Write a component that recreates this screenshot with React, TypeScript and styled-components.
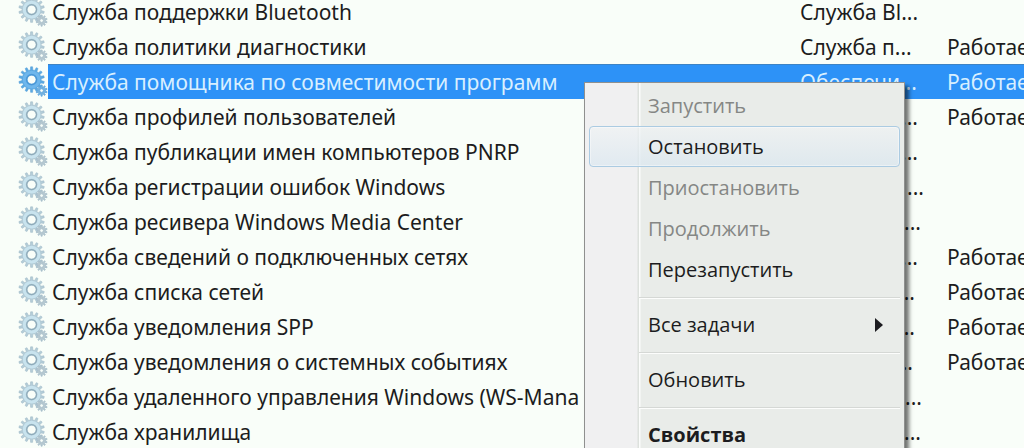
import React from "react";
import styled, { createGlobalStyle, css } from "styled-components";

const GlobalStyle = createGlobalStyle`
  *, *::before, *::after { box-sizing: border-box; }
  body {
    margin: 0;
    overflow: hidden;
    background: #f9fef9;
    color: #1c1c20;
    font-family: "Noto Sans", "Open Sans", sans-serif;
    font-size: 20px;
    line-height: 34px;
  }
`;

const Pane = styled.main`
  position: relative;
  height: 100vh;
  overflow: hidden;
`;

const ServiceTable = styled.table`
  width: 100%;
  margin-top: -6px;
  table-layout: fixed;
  border-collapse: separate;
  border-spacing: 0;
  font-size: 21px;
`;

const IconCol = styled.col`
  width: 48px;
`;

const DescriptionCol = styled.col`
  width: 147px;
`;

const StatusCol = styled.col`
  width: 81px;
`;

const Cell = styled.td`
  height: 35px;
  padding: 0 0 0 4px;
  overflow: hidden;
  white-space: nowrap;
`;

const IconCell = styled(Cell)`
  padding: 0 0 0 18px;
`;

const Row = styled.tr<{ $selected: boolean }>`
  ${(p) =>
    p.$selected &&
    css`
      color: #d8efff;
      ${Cell}:not(${IconCell}) {
        background: #2d92f7;
        border-top: 1px solid #3d83c4;
      }
    `}
`;

const Tail = styled.span<{ $width: number }>`
  display: block;
  width: ${(p) => p.$width}px;
  text-align: right;
`;

const Gears = styled.svg`
  display: block;
  width: 32px;
  height: 32px;
`;

const Menu = styled.div`
  position: absolute;
  top: 82px;
  left: 584px;
  width: 321px;
  padding: 2px 4px;
  border: 1px solid #8f908f;
  background: linear-gradient(to right, #f0f0f1 52px, #dde1dd 53px, #dde1dd 54px, #fbfcfb 54px, #fbfcfb 55px, #e9ece9 56px);
  box-shadow: 4px 4px 4px rgba(0, 0, 0, 0.55);
  font-family: "Open Sans", "Noto Sans", sans-serif;
`;

const MenuItem = styled.button<{ $active?: boolean; $strong?: boolean }>`
  display: flex;
  align-items: center;
  justify-content: space-between;
  width: 100%;
  height: 41px;
  padding: 0 16px 0 58px;
  border: 1px solid transparent;
  border-radius: 4px;
  background: none;
  color: #1c1c20;
  font: inherit;
  font-weight: ${(p) => (p.$strong ? 700 : 400)};
  text-align: left;

  &:disabled {
    color: #858785;
  }

  ${(p) =>
    p.$active &&
    css`
      border-color: #abcbe2;
      background: linear-gradient(rgba(240, 243, 244, 0.7), rgba(218, 231, 240, 0.7));
      box-shadow: inset 0 0 0 1px rgba(255, 255, 255, 0.4);
    `}
`;

const Separator = styled.hr`
  height: 2px;
  margin: 7px 0 5px 50px;
  border: 0;
  border-top: 1px solid #d5d8d5;
  border-bottom: 1px solid #fcfdfc;
`;

const Arrow = styled.svg`
  width: 8px;
  height: 14px;
  fill: #1c1c20;
`;

function gearPath(cx: number, cy: number, outer: number, inner: number, hole: number, teeth: number) {
  const step = (Math.PI * 2) / teeth;
  const at = (r: number, a: number) => `${(cx + r * Math.sin(a)).toFixed(2)} ${(cy - r * Math.cos(a)).toFixed(2)}`;
  const points: string[] = [];
  for (let i = 0; i < teeth; i++) {
    const a = i * step;
    points.push(at(inner, a - step * 0.28), at(outer, a - step * 0.17), at(outer, a + step * 0.17), at(inner, a + step * 0.28));
  }
  return `M${points.join("L")}ZM${at(hole, 0)}A${hole} ${hole} 0 1 0 ${at(hole, Math.PI)}A${hole} ${hole} 0 1 0 ${at(hole, 0)}Z`;
}

const LARGE_GEAR = gearPath(13.6, 13.6, 12.8, 9.6, 4.4, 14);
const SMALL_GEAR = gearPath(23.6, 24.6, 5.6, 3.8, 1.8, 10);

function ServiceIcon({ selected }: { selected: boolean }) {
  const large = selected ? "#5aa9e2" : "#b4cdd8";
  const edge = selected ? "#5aa2da" : "#a3bcc9";
  const ring = selected ? "#4996d6" : "#8eabba";
  const small = selected ? "#72b2e0" : "#b6c8d0";
  return (
    <Gears viewBox="0 0 32 32" aria-hidden="true">
      <path d={LARGE_GEAR} fill={large} stroke={edge} strokeWidth="0.6" fillRule="evenodd" />
      <circle cx="13.6" cy="13.6" r="7.4" fill="none" stroke={selected ? "#6fb7ec" : "#c8e3ee"} strokeWidth="3" />
      <circle cx="13.6" cy="13.6" r="5" fill="none" stroke={ring} strokeWidth="1.1" />
      <path d={SMALL_GEAR} fill={small} stroke={edge} strokeWidth="0.7" fillRule="evenodd" />
    </Gears>
  );
}

interface Service {
  name: string;
  description: string;
  tail?: number;
  running?: boolean;
  selected?: boolean;
}

const services: Service[] = [
  { name: "Служба поддержки Bluetooth", description: "Служба Bl..." },
  { name: "Служба политики диагностики", description: "Служба п...", running: true },
  { name: "Служба помощника по совместимости программ", description: "Обеспечи...", running: true, selected: true },
  { name: "Служба профилей пользователей", description: "...", tail: 118, running: true },
  { name: "Служба публикации имен компьютеров PNRP", description: "...", tail: 118 },
  { name: "Служба регистрации ошибок Windows", description: "...", tail: 124 },
  { name: "Служба ресивера Windows Media Center", description: "...", tail: 121 },
  { name: "Служба сведений о подключенных сетях", description: "...", tail: 118, running: true },
  { name: "Служба списка сетей", description: "...", tail: 115, running: true },
  { name: "Служба уведомления SPP", description: "...", tail: 115, running: true },
  { name: "Служба уведомления о системных событиях", description: "...", tail: 113, running: true },
  { name: "Служба удаленного управления Windows (WS-Mana", description: "...", tail: 122 },
  { name: "Служба хранилища", description: "...", tail: 121 },
];

export default function App() {
  return (
    <>
      <GlobalStyle />
      <Pane>
        <ServiceTable>
          <colgroup>
            <IconCol />
            <col />
            <DescriptionCol />
            <StatusCol />
          </colgroup>
          <tbody>
            {services.map((s) => (
              <Row key={s.name} $selected={!!s.selected}>
                <IconCell>
                  <ServiceIcon selected={!!s.selected} />
                </IconCell>
                <Cell>{s.name}</Cell>
                <Cell>{s.tail ? <Tail $width={s.tail}>{s.description}</Tail> : s.description}</Cell>
                <Cell>{s.running ? "Работает" : ""}</Cell>
              </Row>
            ))}
          </tbody>
        </ServiceTable>
        <Menu role="menu">
          <MenuItem role="menuitem" disabled>Запустить</MenuItem>
          <MenuItem role="menuitem" $active>Остановить</MenuItem>
          <MenuItem role="menuitem" disabled>Приостановить</MenuItem>
          <MenuItem role="menuitem" disabled>Продолжить</MenuItem>
          <MenuItem role="menuitem">Перезапустить</MenuItem>
          <Separator />
          <MenuItem role="menuitem" aria-haspopup="menu">
            Все задачи
            <Arrow viewBox="0 0 8 14" aria-hidden="true">
              <path d="M0 0L8 7L0 14Z" />
            </Arrow>
          </MenuItem>
          <Separator />
          <MenuItem role="menuitem">Обновить</MenuItem>
          <Separator />
          <MenuItem role="menuitem" $strong>Свойства</MenuItem>
        </Menu>
      </Pane>
    </>
  );
}
